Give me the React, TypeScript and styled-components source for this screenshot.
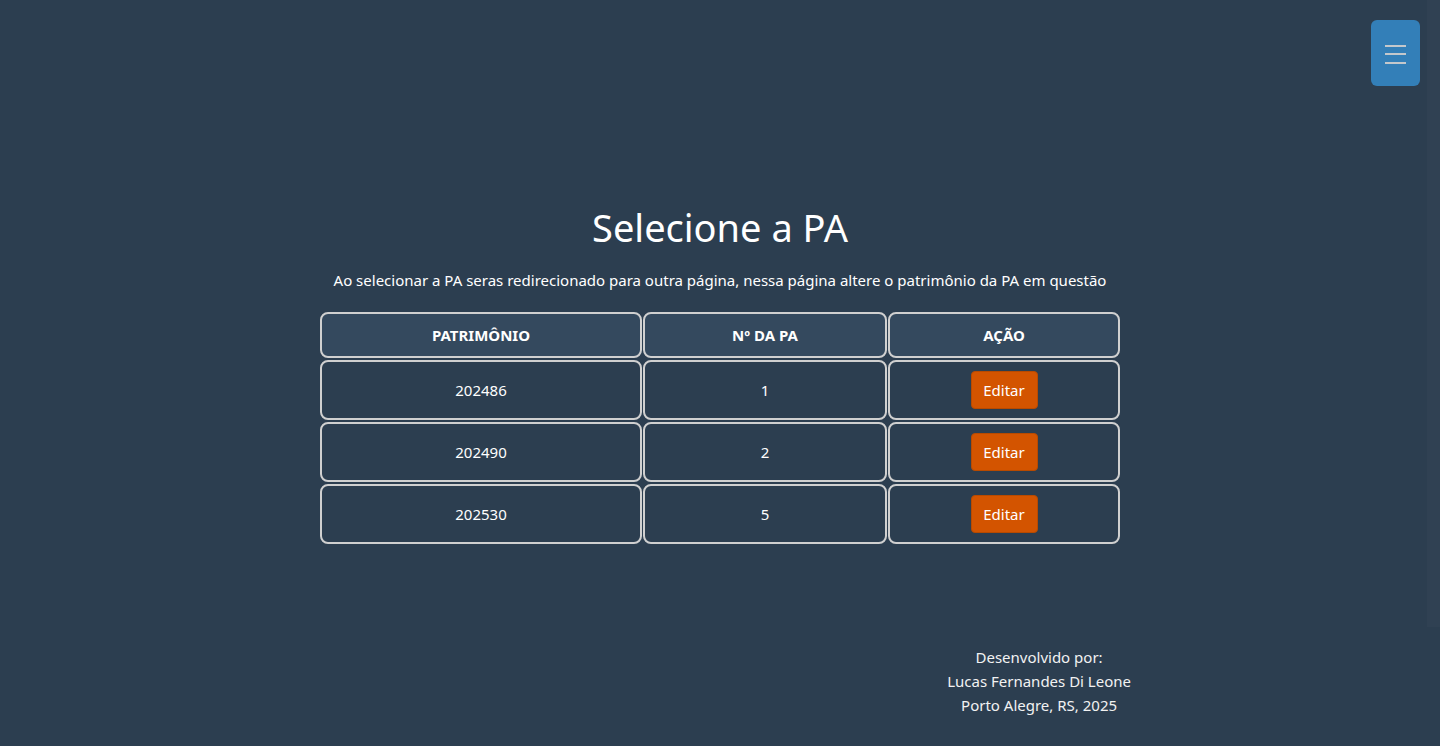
import React from "react";
import styled, { createGlobalStyle } from "styled-components";

const GlobalStyle = createGlobalStyle`
  *, *::before, *::after { box-sizing: border-box; }
  html, body { margin: 0; padding: 0; }
  body {
    background: #2c3e50;
    color: #ecf0f1;
    font-family: "Noto Sans", "Open Sans", sans-serif;
  }
`;

const Page = styled.div`
  min-height: 100vh;
  display: grid;
  grid-template-rows: 1fr auto 1fr;
  justify-items: center;
`;

const Main = styled.main`
  grid-row: 2;
  display: flex;
  flex-direction: column;
  align-items: center;
  margin-top: 4px;
`;

const Title = styled.h1`
  margin: 0;
  font-size: 38px;
  font-weight: 400;
  line-height: 46px;
  color: #ffffff;
`;

const Subtitle = styled.p`
  margin: 19px 0 19px;
  font-size: 15px;
  line-height: 22px;
  color: #ffffff;
`;

const Table = styled.table`
  border-collapse: separate;
  border-spacing: 1px 2px;
  table-layout: fixed;
  width: 802px;
`;

const HeadCell = styled.th<{ $w: number }>`
  width: ${(p) => p.$w}px;
  background: #34495e;
  border: 2px solid #d0d0d0;
  border-radius: 8px;
  padding: 11px 8px;
  font-size: 15px;
  font-weight: 700;
  line-height: 20px;
  color: #ffffff;
  text-align: center;
`;

const Cell = styled.td`
  border: 2px solid #d0d0d0;
  border-radius: 8px;
  height: 60px;
  padding: 0 8px;
  font-size: 15px;
  color: #ffffff;
  text-align: center;
  vertical-align: middle;
`;

const EditButton = styled.button`
  background: #d35400;
  color: #ffffff;
  border: 1px solid #b84a00;
  border-radius: 4px;
  height: 38px;
  width: 67px;
  padding: 0;
  font-family: inherit;
  font-size: 15px;
  cursor: pointer;
`;

const Footer = styled.footer`
  grid-row: 3;
  align-self: end;
  justify-self: end;
  margin-right: 309px;
  margin-bottom: 29px;
  display: flex;
  flex-direction: column;
  align-items: center;
  font-size: 15px;
  line-height: 24px;
  color: #f2f2f2;
`;

const MenuButton = styled.button`
  position: fixed;
  top: 20px;
  right: 20px;
  width: 49px;
  height: 66px;
  border: none;
  border-radius: 6px;
  background: #337fb8;
  display: flex;
  flex-direction: column;
  align-items: center;
  justify-content: center;
  gap: 6.5px;
  padding: 2px 0 0;
  cursor: pointer;
`;

const Bar = styled.span`
  display: block;
  width: 21px;
  height: 2px;
  background: #c4c8cc;
`;

const EdgeStrip = styled.div`
  position: fixed;
  top: 0;
  right: 0;
  width: 13px;
  height: 627px;
  background: rgba(255, 255, 255, 0.018);
`;

const rows = [
  { patrimonio: "202486", pa: "1" },
  { patrimonio: "202490", pa: "2" },
  { patrimonio: "202530", pa: "5" },
];

export default function App() {
  return (
    <>
      <GlobalStyle />
      <EdgeStrip />
      <MenuButton aria-label="menu">
        <Bar />
        <Bar />
        <Bar />
      </MenuButton>
      <Page>
        <Main>
          <Title>Selecione a PA</Title>
          <Subtitle>
            Ao selecionar a PA seras redirecionado para outra página, nessa página altere o patrimônio da PA em questão
          </Subtitle>
          <Table>
            <thead>
              <tr>
                <HeadCell $w={322}>PATRIMÔNIO</HeadCell>
                <HeadCell $w={244}>Nº DA PA</HeadCell>
                <HeadCell $w={232}>AÇÃO</HeadCell>
              </tr>
            </thead>
            <tbody>
              {rows.map((r) => (
                <tr key={r.patrimonio}>
                  <Cell>{r.patrimonio}</Cell>
                  <Cell>{r.pa}</Cell>
                  <Cell>
                    <EditButton>Editar</EditButton>
                  </Cell>
                </tr>
              ))}
            </tbody>
          </Table>
        </Main>
        <Footer>
          <span>Desenvolvido por:</span>
          <span>Lucas Fernandes Di Leone</span>
          <span>Porto Alegre, RS, 2025</span>
        </Footer>
      </Page>
    </>
  );
}
